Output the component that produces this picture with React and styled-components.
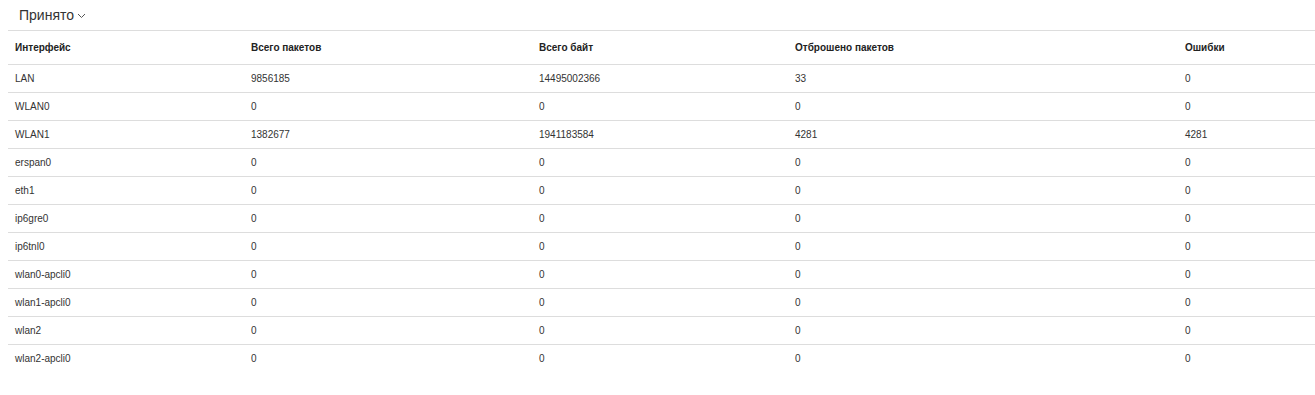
import React from "react";
import styled, { createGlobalStyle } from "styled-components";

const Global = createGlobalStyle`
  html, body {
    margin: 0;
    background: #fff;
    font-family: "Liberation Sans", Arial, sans-serif;
    color: #333;
    overflow: hidden;
  }
`;

const Page = styled.div`
  padding-left: 8px;
`;

const Header = styled.div`
  height: 30px;
  display: flex;
  align-items: center;
  padding-left: 11px;
  font-size: 14px;
  color: #333;
  gap: 3px;
`;

const Table = styled.table`
  width: 1307px;
  border-collapse: collapse;
  table-layout: fixed;
  border-top: 1px solid #ddd;
`;

const Th = styled.th`
  box-sizing: border-box;
  text-align: left;
  font-weight: bold;
  font-size: 10px;
  height: 34px;
  padding: 0 7px;
  color: #222;
  border-bottom: 1px solid #ddd;
  width: ${(p) => p.$w}px;
`;

const Td = styled.td`
  font-size: 10px;
  height: 27px;
  padding: 0 7px;
  color: #333;
  border-bottom: ${(p) => (p.$last ? "none" : "1px solid #ddd")};
`;

const cols = [
  { title: "Интерфейс", w: 236 },
  { title: "Всего пакетов", w: 288 },
  { title: "Всего байт", w: 256 },
  { title: "Отброшено пакетов", w: 390 },
  { title: "Ошибки", w: 137 },
];

const rows = [
  ["LAN", "9856185", "14495002366", "33", "0"],
  ["WLAN0", "0", "0", "0", "0"],
  ["WLAN1", "1382677", "1941183584", "4281", "4281"],
  ["erspan0", "0", "0", "0", "0"],
  ["eth1", "0", "0", "0", "0"],
  ["ip6gre0", "0", "0", "0", "0"],
  ["ip6tnl0", "0", "0", "0", "0"],
  ["wlan0-apcli0", "0", "0", "0", "0"],
  ["wlan1-apcli0", "0", "0", "0", "0"],
  ["wlan2", "0", "0", "0", "0"],
  ["wlan2-apcli0", "0", "0", "0", "0"],
];

function Chevron() {
  return (
    <svg width="9" height="6" viewBox="0 0 9 6" style={{ marginTop: 2 }}>
      <path d="M1 1 L4.5 4.5 L8 1" fill="none" stroke="#555" strokeWidth="1" />
    </svg>
  );
}

export default function App() {
  return (
    <Page>
      <Global />
      <Header>
        Принято
        <Chevron />
      </Header>
      <Table>
        <thead>
          <tr>
            {cols.map((c) => (
              <Th key={c.title} $w={c.w}>
                {c.title}
              </Th>
            ))}
          </tr>
        </thead>
        <tbody>
          {rows.map((r, i) => (
            <tr key={r[0]}>
              {r.map((v, j) => (
                <Td key={j} $last={i === rows.length - 1}>
                  {v}
                </Td>
              ))}
            </tr>
          ))}
        </tbody>
      </Table>
    </Page>
  );
}
